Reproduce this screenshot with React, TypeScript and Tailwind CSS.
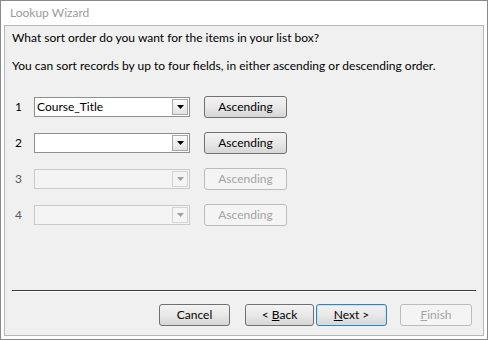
import React from "react";

const font = { fontFamily: 'Lato, "Noto Sans", sans-serif' };

type RowProps = { n: number; value?: string; enabled: boolean };

const SortRow = ({ n, value, enabled }: RowProps) => {
  return (
    <div className="flex items-center h-[22px]">
      <div className={`w-[22px] pl-[10px] ${enabled ? "text-black" : "text-[#5a5a5a]"}`}>{n}</div>
      <div
        className={`ml-[7px] w-[156px] h-[20px] flex items-center border ${
          enabled ? "bg-white border-[#8e8f8f]" : "bg-[#f4f4f4] border-[#c9c9c9]"
        }`}
      >
        <div className="flex-1 pl-[2px] leading-[18px] truncate">{value}</div>
        <div
          className={`mr-[1px] w-[16px] h-[16px] flex items-center justify-center border ${
            enabled
              ? "border-[#a7a7a7] bg-gradient-to-b from-[#fbfbfb] to-[#e3e3e3]"
              : "border-[#d3d3d3] bg-[#f4f4f4]"
          }`}
        >
          <svg width="7" height="4" viewBox="0 0 7 4">
            <path d="M0 0h7L3.5 4z" fill={enabled ? "#000" : "#a0a0a0"} />
          </svg>
        </div>
      </div>
      <button
        className={`ml-[14px] w-[83px] h-[22px] rounded-[3px] border ${
          enabled
            ? "border-[#707070] bg-gradient-to-b from-[#f3f3f3] via-[#e8e8e8] to-[#d6d6d6] text-black"
            : "border-[#b8bcbf] bg-[#f4f4f4] text-[#a3a3a3]"
        }`}
      >
        Ascending
      </button>
    </div>
  );
};

const WizButton = ({
  children,
  width,
  disabled,
  focused,
}: {
  children: React.ReactNode;
  width: string;
  disabled?: boolean;
  focused?: boolean;
}) => (
  <button
    className={`${width} h-[22px] rounded-[3px] border ${
      disabled
        ? "border-[#b8bcbf] bg-[#f4f4f4] text-[#a3a3a3]"
        : focused
        ? "border-[#3c7fb1] bg-gradient-to-b from-[#f3f3f3] via-[#e8e8e8] to-[#d6d6d6] shadow-[inset_0_0_0_1px_#bfe4f7] text-black"
        : "border-[#707070] bg-gradient-to-b from-[#f3f3f3] via-[#e8e8e8] to-[#d6d6d6] text-black"
    }`}
  >
    {children}
  </button>
);

export default function App() {
  return (
    <div
      className="w-[488px] h-[340px] bg-white border border-[#8a8a8a] flex flex-col text-[12px] text-black"
      style={font}
    >
      <div className="h-[24px] pl-[9px] pt-[3px] text-[#9b9b9b] leading-[18px]">Lookup Wizard</div>
      <div className="mx-[3px] mb-[3px] flex-1 bg-[#f0f0f0] border border-[#b7b7b7] flex flex-col">
        <div className="pl-[7px] mt-[4px] leading-[16px]">
          What sort order do you want for the items in your list box?
        </div>
        <div className="pl-[7px] mt-[12px] leading-[16px]">
          You can sort records by up to four fields, in either ascending or descending order.
        </div>
        <div className="mt-[22px] flex flex-col gap-[14px]">
          <SortRow n={1} value="Course_Title" enabled />
          <SortRow n={2} enabled />
          <SortRow n={3} enabled={false} />
          <SortRow n={4} enabled={false} />
        </div>
        <div className="mt-[64px] mx-[7px] h-[2px] border-t border-[#3a3a3a] border-b border-b-white" />
        <div className="mt-[12px] flex items-center pl-[154px]">
          <WizButton width="w-[71px]">Cancel</WizButton>
          <div className="ml-[15px] flex">
            <WizButton width="w-[69px]">
              &lt; <span className="underline">B</span>ack
            </WizButton>
            <div className="ml-[2px]">
              <WizButton width="w-[71px]" focused>
                <span className="underline">N</span>ext &gt;
              </WizButton>
            </div>
          </div>
          <div className="ml-[13px]">
            <WizButton width="w-[72px]" disabled>
              <span className="underline">F</span>inish
            </WizButton>
          </div>
        </div>
      </div>
    </div>
  );
}
